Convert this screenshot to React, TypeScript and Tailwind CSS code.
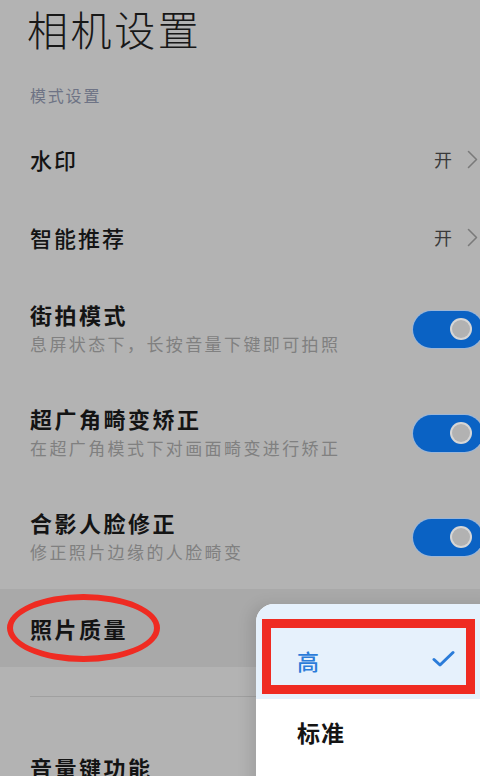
import React from "react";

const FONT = { fontFamily: '"Noto Sans CJK SC", "Noto Sans", sans-serif' };

function Chevron() {
  return (
    <svg width="11" height="19" viewBox="0 0 11 19" className="ml-[15px]">
      <path d="M1.5 1.5 L9.5 9.5 L1.5 17.5" fill="none" stroke="#7a7a7a" strokeWidth="1.6" strokeLinecap="round" strokeLinejoin="round" />
    </svg>
  );
}

function Toggle() {
  return (
    <div className="w-[70px] h-[37px] rounded-full bg-[#0a62c4] ring-1 ring-[#9db6d6] flex items-center justify-end pr-[13px] -mr-[3px] shrink-0">
      <div className="w-[18px] h-[18px] rounded-full bg-[#b2b2b2] ring-2 ring-[#d6d6d6]" />
    </div>
  );
}

function LinkRow({ title }: { title: string }) {
  return (
    <div className="h-[78px] flex items-center pl-[30px] pr-[2px]">
      <div className="flex-1 text-[22px] leading-[30px] font-medium tracking-[2px] text-[#141414]">{title}</div>
      <div className="text-[18px] leading-[24px] text-[#3a3a3a]">开</div>
      <Chevron />
    </div>
  );
}

function ToggleRow({ title, sub }: { title: string; sub: string }) {
  return (
    <div className="h-[104px] flex items-center pl-[30px]">
      <div className="flex-1 flex flex-col">
        <div className="text-[22px] leading-[30px] font-bold tracking-[2.5px] text-[#141414]">{title}</div>
        <div className="text-[17px] leading-[30px] tracking-[2.4px] text-[#808080]">{sub}</div>
      </div>
      <Toggle />
    </div>
  );
}

export default function App() {
  return (
    <div className="relative w-[480px] h-[776px] overflow-hidden bg-[#b3b3b3]" style={FONT}>
      <div className="h-[57px] pl-[27px] text-[41px] leading-[57px] font-light tracking-[2.6px] text-[#181818]">相机设置</div>
      <div className="mt-[23px] h-[30px] pl-[30px] text-[16px] leading-[30px] tracking-[1.8px] text-[#6e7385]">模式设置</div>
      <div className="h-[10px]" />
      <LinkRow title="水印" />
      <LinkRow title="智能推荐" />
      <div className="h-[1px]" />
      <ToggleRow title="街拍模式" sub="息屏状态下，长按音量下键即可拍照" />
      <ToggleRow title="超广角畸变矫正" sub="在超广角模式下对画面畸变进行矫正" />
      <ToggleRow title="合影人脸修正" sub="修正照片边缘的人脸畸变" />
      <div className="h-[78px] bg-[#a9a9a9] flex items-center pl-[30px]">
        <div className="text-[22px] leading-[30px] font-bold tracking-[2.5px] text-[#141414]">照片质量</div>
      </div>
      <div className="mt-[29px] ml-[30px] h-[1px] bg-[#a0a0a0]" />
      <div className="mt-[55px] pl-[30px] text-[22px] leading-[30px] font-bold tracking-[2.5px] text-[#141414]">音量键功能</div>

      {/* red ellipse annotation */}
      <div className="absolute left-[7px] top-[594px] w-[153px] h-[68px] rounded-[50%] border-[6px] border-[#ef2b22]" />

      {/* popup menu */}
      <div className="absolute left-[256px] top-[604px] w-[240px] h-[200px] bg-white rounded-tl-[18px] overflow-hidden shadow-[-6px_0_14px_rgba(0,0,0,0.10)]">
        <div className="h-[95px] bg-[#e6f1fc] flex items-center pl-[41px] pr-[43px]">
          <div className="flex-1 text-[22px] leading-[30px] font-medium text-[#2b7cd9] mt-[16px]">高</div>
        </div>
        <div className="h-[70px] flex items-center pl-[41px]">
          <div className="text-[23px] leading-[30px] font-bold text-[#141414] tracking-[1px] -mt-[4px]">标准</div>
        </div>
      </div>

      {/* check icon */}
      <svg className="absolute left-[432px] top-[650px]" width="23" height="18" viewBox="0 0 23 18">
        <path d="M2 9.5 L8 15 L21 2.5" fill="none" stroke="#2b7cd9" strokeWidth="3" strokeLinecap="round" strokeLinejoin="round" />
      </svg>

      {/* red rectangle annotation */}
      <div className="absolute left-[262px] top-[619px] w-[213px] h-[75px] border-[9px] border-[#ef2b22]" />
    </div>
  );
}
